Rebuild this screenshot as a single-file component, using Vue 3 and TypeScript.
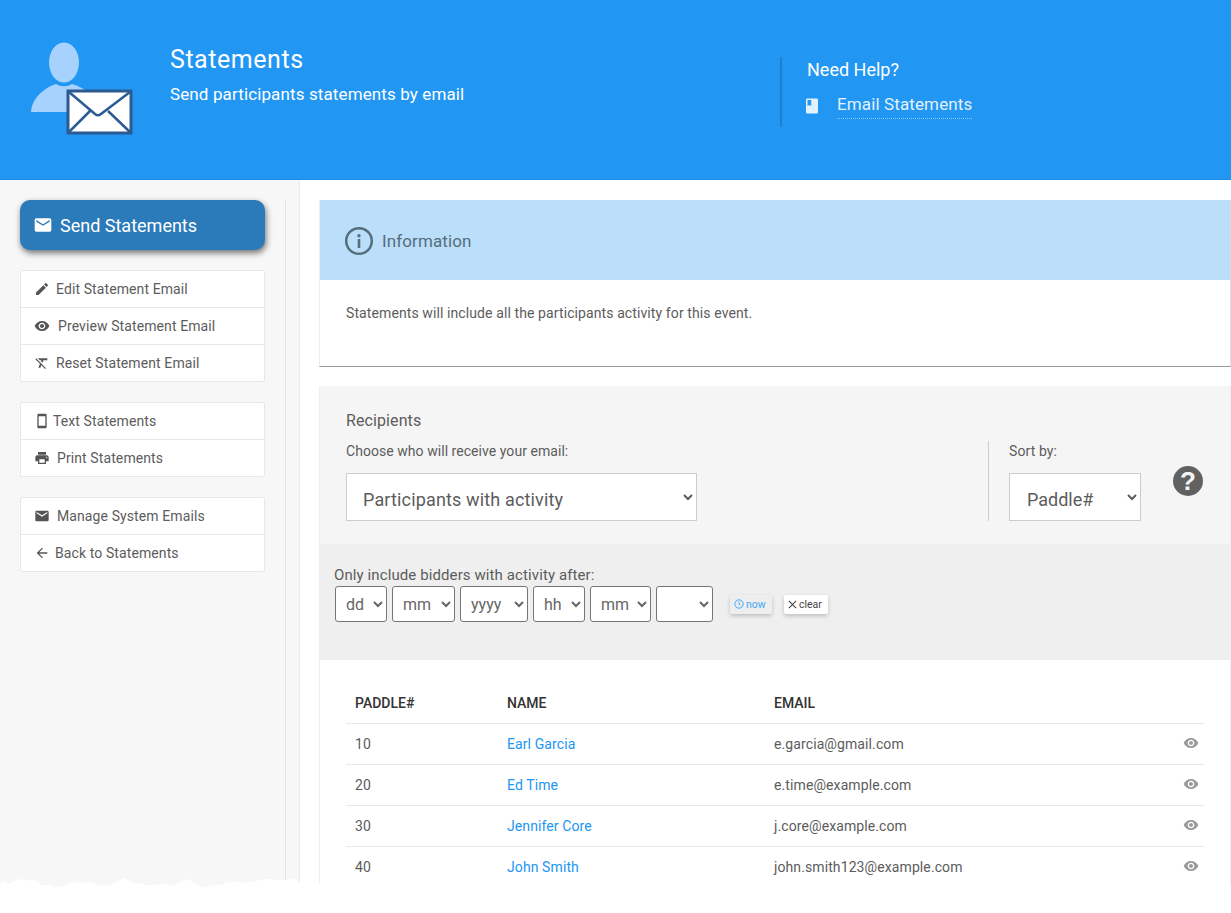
<script setup lang="ts">
const P = {
  email: 'M20 4H4c-1.1 0-1.99.9-1.99 2L2 18c0 1.1.9 2 2 2h16c1.1 0 2-.9 2-2V6c0-1.1-.9-2-2-2zm0 4l-8 5-8-5V6l8 5 8-5v2z',
  edit: 'M3 17.25V21h3.75L17.81 9.94l-3.75-3.75L3 17.25zM20.71 7.04c.39-.39.39-1.02 0-1.41l-2.34-2.34c-.39-.39-1.02-.39-1.41 0l-1.83 1.83 3.75 3.75 1.83-1.83z',
  eye: 'M12 4.5C7 4.5 2.73 7.61 1 12c1.73 4.39 6 7.5 11 7.5s9.27-3.11 11-7.5c-1.73-4.39-6-7.5-11-7.5zM12 17c-2.76 0-5-2.24-5-5s2.24-5 5-5 5 2.24 5 5-2.24 5-5 5zm0-8c-1.66 0-3 1.34-3 3s1.34 3 3 3 3-1.34 3-3-1.34-3-3-3z',
  clear: 'M3.27 5L2 6.27l6.97 6.97L6.5 19h3l1.57-3.66L16.73 21 18 19.73 3.55 5.27 3.27 5zM6 5v.18L8.82 8h2.4l-.72 1.68 2.1 2.1L14.21 8H20V5H6z',
  phone: 'M17 1.01L7 1c-1.1 0-2 .9-2 2v18c0 1.1.9 2 2 2h10c1.1 0 2-.9 2-2V3c0-1.1-.9-1.99-2-1.99zM17 19H7V5h10v14z',
  print: 'M19 8H5c-1.66 0-3 1.34-3 3v6h4v4h12v-4h4v-6c0-1.66-1.34-3-3-3zm-3 11H8v-5h8v5zm3-7c-.55 0-1-.45-1-1s.45-1 1-1 1 .45 1 1-.45 1-1 1zm-1-9H6v4h12V3z',
  back: 'M20 11H7.83l5.59-5.59L12 4l-8 8 8 8 1.41-1.41L7.83 13H20v-2z',
  book: 'M18 2H6c-1.1 0-2 .9-2 2v16c0 1.1.9 2 2 2h12c1.1 0 2-.9 2-2V4c0-1.1-.9-2-2-2zM6 4h5v8l-2.5-1.5L6 12V4z',
}

const groups = [
  [
    { icon: P.edit, label: 'Edit Statement Email', gap: 6 },
    { icon: P.eye, label: 'Preview Statement Email', gap: 8 },
    { icon: P.clear, label: 'Reset Statement Email', gap: 6 },
  ],
  [
    { icon: P.phone, label: 'Text Statements', gap: 3 },
    { icon: P.print, label: 'Print Statements', gap: 7 },
  ],
  [
    { icon: P.email, label: 'Manage System Emails', gap: 7 },
    { icon: P.back, label: 'Back to Statements', gap: 5 },
  ],
]

const rows = [
  { paddle: 10, name: 'Earl Garcia', email: 'e.garcia@gmail.com' },
  { paddle: 20, name: 'Ed Time', email: 'e.time@example.com' },
  { paddle: 30, name: 'Jennifer Core', email: 'j.core@example.com' },
  { paddle: 40, name: 'John Smith', email: 'john.smith123@example.com' },
]

const dateFields = [
  { text: 'dd', w: 52 },
  { text: 'mm', w: 63 },
  { text: 'yyyy', w: 68 },
  { text: 'hh', w: 52 },
  { text: 'mm', w: 61 },
  { text: '', w: 57 },
]

// Torn paper edge: control points read from the screenshot (x, y relative to the overlay).
const edge: [number, number][] = [
  [0, 12.7], [5, 12], [10, 14], [20, 8.7], [27, 10.7], [35, 10], [42, 15], [55, 16.7], [67, 14.7],
  [77, 12], [87, 12], [97, 14.7], [110, 15.3], [125, 8], [135, 13.3], [147, 15], [160, 14], [173, 16],
  [185, 8.7], [197, 14.7], [207, 17.3], [217, 15.3], [227, 12], [243, 12.7], [263, 9.3], [277, 10],
  [293, 8.7], [300, 12.7],
]
function tornPath(): string {
  let d = 'M0 43'
  edge.forEach(([x, y], i) => {
    d += ` L${x} ${y}`
    if (i < edge.length - 1) {
      const [nx, ny] = edge[i + 1]
      const mx = (x + nx) / 2
      const my = (y + ny) / 2 + (i % 2 ? 0.8 : -0.8)
      d += ` L${mx} ${my.toFixed(1)}`
    }
  })
  return d + ' L1231 13 L1231 43 Z'
}
const torn = tornPath()
</script>

<template>
  <div class="page">
    <header class="top">
      <svg class="logo" width="170" height="110" viewBox="0 30 170 110">
        <ellipse cx="64" cy="62.5" rx="15" ry="20" fill="#a6d2fd" />
        <path d="M31 112c1-14 13-24 25-28 5 3 11 3 16 0 7 2 13 5 18 10v18z" fill="#a6d2fd" />
        <rect x="68" y="91" width="63" height="42" fill="#fff" stroke="#2c5b94" stroke-width="3" />
        <path d="M69 92l26 22c2 1.600 4 1.600 6 0l29-22M69 132l21-21M130 132l-22-21" fill="none" stroke="#2c5b94" stroke-width="2.500" />
      </svg>
      <div class="title">
        <h1>Statements</h1>
        <p>Send participants statements by email</p>
      </div>
      <div class="help">
        <h2>Need Help?</h2>
        <div class="help-link">
          <svg width="18" height="18" viewBox="0 0 24 24"><path :d="P.book" fill="#e3f2fd" /></svg>
          <a>Email Statements</a>
        </div>
      </div>
    </header>

    <div class="body">
      <aside class="side">
        <div class="side-inner">
          <button class="send">
            <svg width="20" height="20" viewBox="0 0 24 24"><path :d="P.email" fill="#fff" /></svg>
            Send Statements
          </button>
          <ul v-for="(g, i) in groups" :key="i" class="menu">
            <li v-for="item in g" :key="item.label">
              <svg width="16" height="16" viewBox="0 0 24 24"><path :d="item.icon" fill="#555" /></svg>
              <span :style="{ marginLeft: item.gap + 'px' }">{{ item.label }}</span>
            </li>
          </ul>
        </div>
      </aside>

      <main class="main">
        <section class="info">
          <div class="info-head">
            <svg width="30" height="30" viewBox="0 0 30 30">
              <circle cx="15" cy="15" r="12.800" fill="none" stroke="#546e7a" stroke-width="2.500" />
              <circle cx="15" cy="9.800" r="1.700" fill="#546e7a" />
              <rect x="13.700" y="13" width="2.600" height="9" fill="#546e7a" />
            </svg>
            <span>Information</span>
          </div>
          <p class="info-body">Statements will include all the participants activity for this event.</p>
        </section>

        <section class="recipients">
          <div class="rec-top">
            <div class="rec-left">
              <h3>Recipients</h3>
              <label>Choose who will receive your email:</label>
              <select class="big who"><option>Participants with activity</option></select>
            </div>
            <div class="rec-sort">
              <label>Sort by:</label>
              <select class="big sort"><option>Paddle#</option></select>
            </div>
            <div class="qmark">?</div>
          </div>

          <div class="dates">
            <label>Only include bidders with activity after:</label>
            <div class="date-row">
              <select v-for="(f, i) in dateFields" :key="i" class="dsel" :style="{ width: f.w + 'px' }">
                <option>{{ f.text }}</option>
              </select>
              <button class="mini now">
                <svg width="10" height="10" viewBox="0 0 24 24">
                  <circle cx="12" cy="12" r="10" fill="none" stroke="#42a5f5" stroke-width="2.400" />
                  <path d="M12 6v6.500l4 2.500" fill="none" stroke="#42a5f5" stroke-width="2.200" />
                </svg>
                now
              </button>
              <button class="mini clr">
                <svg width="9" height="9" viewBox="0 0 10 10"><path d="M1 1l8 8M9 1l-8 8" stroke="#444" stroke-width="1.200" /></svg>
                clear
              </button>
            </div>
          </div>

          <div class="table-wrap">
            <table>
              <thead>
                <tr>
                  <th class="c1">Paddle#</th>
                  <th class="c2">Name</th>
                  <th class="c3">Email</th>
                  <th class="c4"></th>
                </tr>
              </thead>
              <tbody>
                <tr v-for="r in rows" :key="r.paddle">
                  <td>{{ r.paddle }}</td>
                  <td><a>{{ r.name }}</a></td>
                  <td>{{ r.email }}</td>
                  <td class="eye">
                    <svg width="16" height="16" viewBox="0 0 24 24"><path :d="P.eye" fill="#9a9a9a" /></svg>
                  </td>
                </tr>
              </tbody>
            </table>
          </div>
        </section>
      </main>
    </div>

    <svg class="torn" width="1231" height="43" viewBox="0 0 1231 43"><path :d="torn" fill="#fff" /></svg>
  </div>
</template>

<style scoped>
.page {
  position: relative;
  height: 913px;
  overflow: hidden;
  background: #fff;
  font-family: Roboto, "Liberation Sans", sans-serif;
  color: #5c5c5c;
  font-size: 14px;
}
.top {
  height: 180px;
  box-sizing: border-box;
  background: #2196f3;
  display: flex;
  color: #fff;
  border-bottom: 1px solid #1e88e5;
}
.logo { flex: none; margin-top: 30px; }
.title { width: 610px; padding-top: 44px; }
.title h1 { margin: 0; font-size: 25px; font-weight: 400; line-height: 32px; letter-spacing: 0.55px; }
.title p { margin: 6px 0 0; font-size: 17px; line-height: 24px; letter-spacing: 0.12px; }
.help {
  margin-top: 57px;
  height: 70px;
  box-sizing: border-box;
  border-left: 2px solid #1e7fcf;
  padding-left: 25px;
}
.help h2 { margin: 0; font-size: 18px; font-weight: 400; line-height: 26px; }
.help-link { display: flex; align-items: center; margin: 9px 0 0 -4px; }
.help-link a {
  margin-left: 16px;
  font-size: 17px;
  line-height: 24px;
  padding-bottom: 2px;
  letter-spacing: 0.12px;
  color: #e3f2fd;
  border-bottom: 1px dotted #90caf9;
}
.body { display: flex; height: 733px; }
.side { width: 300px; flex: none; background: #f7f7f7; box-sizing: border-box; padding-top: 20px; border-right: 1px solid #ececec; }
.side-inner { width: 286px; height: 100%; box-sizing: border-box; padding: 0 20px; border-right: 1px solid #e2e2e2; }
.send {
  width: 245px;
  height: 50px;
  border: none;
  border-radius: 10px;
  background: #2b7ab9;
  color: #fff;
  font: 18px Roboto, sans-serif;
  display: flex;
  align-items: center;
  gap: 7px;
  padding: 0 0 0 13px;
  margin-bottom: 20px;
  box-shadow: 1px 3px 6px rgba(0, 0, 0, 0.55);
}
.menu {
  list-style: none;
  margin: 0 0 20px;
  padding: 0;
  background: #fff;
  border: 1px solid #e8e8e8;
  border-radius: 2px;
}
.menu li {
  height: 36px;
  display: flex;
  align-items: center;
  padding-left: 13px;
  border-top: 1px solid #e8e8e8;
  letter-spacing: 0.1px;
}
.menu li:first-child { border-top: none; height: 36px; }
.main { flex: 1; padding: 20px 0 0 19px; min-width: 0; }
.info { border-left: 1px solid #eee; border-right: 1px solid #ddd; border-bottom: 1px solid #999; height: 167px; box-sizing: border-box; }
.info-head {
  height: 80px;
  background: #bbdefb;
  display: flex;
  align-items: center;
  padding: 2px 0 0 24px;
  box-sizing: border-box;
  color: #546e7a;
  font-size: 17px;
  letter-spacing: 0.1px;
}
.info-head span { margin-left: 8px; }
.info-body { margin: 0; padding: 24px 26px; line-height: 18px; letter-spacing: 0.1px; }
.recipients { margin-top: 19px; border-left: 1px solid #eee; border-right: 1px solid #eee; height: 520px; }
.rec-top {
  height: 158px;
  box-sizing: border-box;
  background: #f5f5f5;
  padding: 0 0 0 26px;
  display: flex;
}
.rec-left { width: 642px; flex: none; padding-top: 25px; }
.rec-left h3 { margin: 0; font-size: 16px; font-weight: 400; line-height: 20px; letter-spacing: 0.1px; }
.rec-left label { display: block; margin-top: 11px; line-height: 18px; letter-spacing: 0.05px; }
.big {
  display: block;
  height: 48px;
  background: #fff;
  border: 1px solid #ccc;
  border-radius: 0;
  color: #5c5c5c;
  font: 18px Roboto, sans-serif;
  padding-top: 4px;
  letter-spacing: 0.15px;
}
.who { width: 351px; margin-top: 13px; padding-left: 12px; }
.rec-sort {
  margin-top: 55px;
  height: 80px;
  box-sizing: border-box;
  border-left: 1px solid #ccc;
  padding: 1px 0 0 20px;
}
.rec-sort label { display: block; line-height: 18px; letter-spacing: 0.1px; }
.sort { width: 132px; margin-top: 13px; padding-left: 13px; letter-spacing: 0; }
.qmark {
  width: 30px;
  height: 30px;
  margin: 80px 0 0 32px;
  border-radius: 50%;
  background: #616161;
  color: #f5f5f5;
  font: bold 26px/30px "Liberation Sans", sans-serif;
  text-align: center;
}
.dates { height: 116px; box-sizing: border-box; background: #efefef; padding: 22px 0 0 14px; }
.dates label { display: block; font-size: 15px; line-height: 19px; letter-spacing: 0.1px; }
.date-row { display: flex; align-items: center; gap: 5px; margin: 1px 0 0 1px; }
.dsel {
  height: 36px;
  background: #fff;
  border: 1px solid #767676;
  border-radius: 3px;
  color: #666;
  font: 16px Roboto, sans-serif;
  padding-left: 6px;
}
.mini {
  height: 19px;
  border: none;
  border-radius: 2px;
  font: 10.500px Roboto, sans-serif;
  padding: 0 4px;
  display: flex;
  align-items: center;
  gap: 2px;
  box-shadow: 0 2px 4px rgba(0, 0, 0, 0.2);
}
.now { width: 42px; margin-left: 12px; background: #eeeeee; color: #42a5f5; }
.clr { width: 44px; margin-left: 7px; background: #fff; color: #444; }
.table-wrap { padding: 24px 26px 0 26px; }
table { width: 858px; border-collapse: collapse; table-layout: fixed; }
th {
  box-sizing: border-box;
  height: 39px;
  text-align: left;
  color: #333;
  font-size: 14px;
  font-weight: 500;
  text-transform: uppercase;
  padding: 0 9px;
  border-bottom: 1px solid #e8e8e8;
}
.c1 { width: 152px; }
.c2 { width: 267px; }
.c4 { width: 40px; }
td { height: 40px; padding: 0 9px; border-bottom: 1px solid #e8e8e8; letter-spacing: 0.1px; }
td a { color: #2196f3; }
.eye { padding: 0 5px 0 0; }
.eye svg { display: block; margin: -1px 0 0 auto; }
.torn { position: absolute; left: 0; top: 870px; display: block; }
</style>

<style>
body { margin: 0; }
</style>
